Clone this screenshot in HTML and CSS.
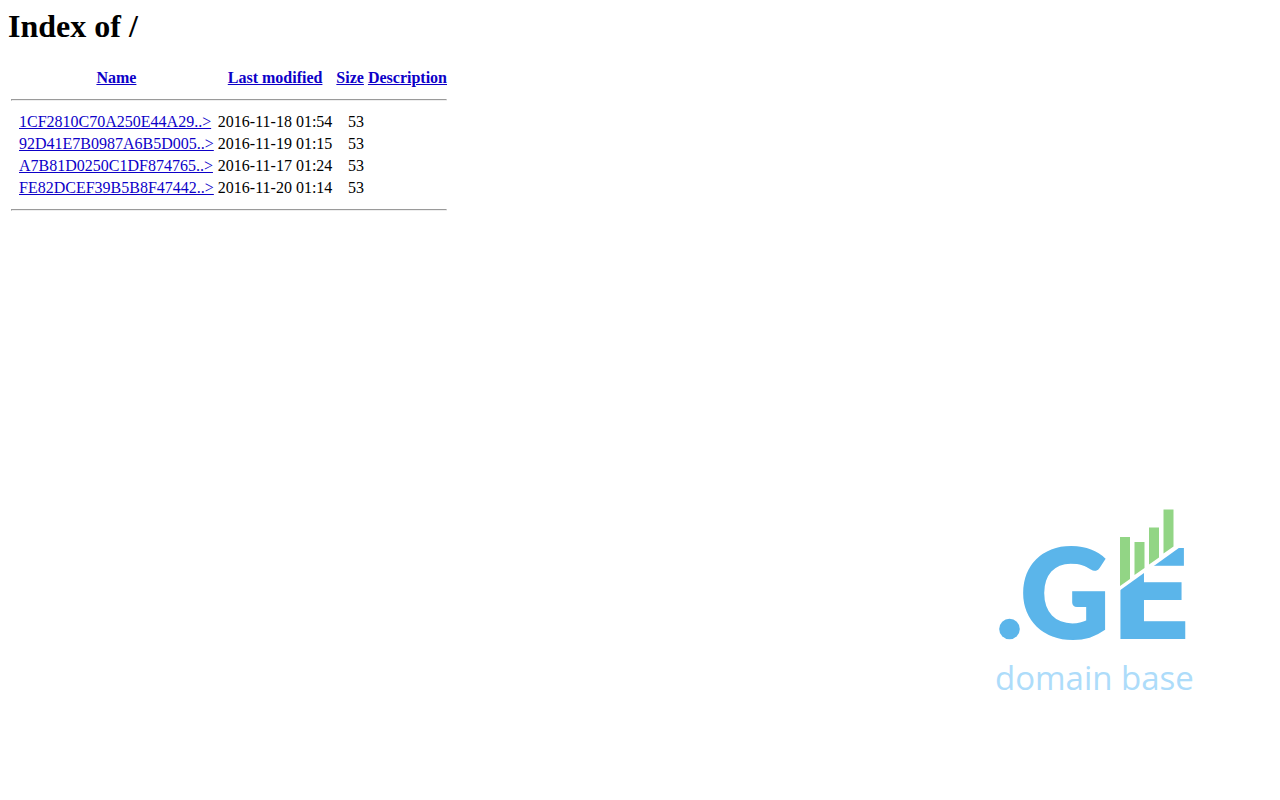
FILE: index.html
```
<!DOCTYPE html>
<html lang="en">
<head>
<meta charset="utf-8">
<title>Index of /</title>
<link rel="stylesheet" href="styles.css">
</head>
<body>
<main>
<h1 class="title">Index of /</h1>
<table class="listing">
<thead>
<tr><th>&nbsp;</th><th><a href="?C=N;O=D">Name</a></th><th><a href="?C=M;O=A">Last modified</a></th><th><a href="?C=S;O=A">Size</a></th><th><a href="?C=D;O=A">Description</a></th></tr>
<tr><th colspan="5"><hr></th></tr>
</thead>
<tbody>
<tr><td>&nbsp;</td><td><a href="#1CF2810C70A250E44A29">1CF2810C70A250E44A29..&gt;</a></td><td class="num">2016-11-18 01:54</td><td class="num">53</td><td></td></tr>
<tr><td>&nbsp;</td><td><a href="#92D41E7B0987A6B5D005">92D41E7B0987A6B5D005..&gt;</a></td><td class="num">2016-11-19 01:15</td><td class="num">53</td><td></td></tr>
<tr><td>&nbsp;</td><td><a href="#A7B81D0250C1DF874765">A7B81D0250C1DF874765..&gt;</a></td><td class="num">2016-11-17 01:24</td><td class="num">53</td><td></td></tr>
<tr><td>&nbsp;</td><td><a href="#FE82DCEF39B5B8F47442">FE82DCEF39B5B8F47442..&gt;</a></td><td class="num">2016-11-20 01:14</td><td class="num">53</td><td></td></tr>
<tr><th colspan="5"><hr></th></tr>
</tbody>
</table>
</main>
<svg class="logo" width="210" height="200" viewBox="990 500 210 200" role="img" aria-label=".GE domain base">
<circle class="blue" cx="1009.500" cy="629" r="10.300"/>
<text class="mark" x="1020" y="638">G</text>
<text class="mark mark-wide" x="1109" y="639">E</text>
<path class="cut" d="M1112 540H1183V545L1112 596Z"/>
<path class="green" d="M1120 537h10v42l-10 7zM1134.500 542h10v26l-10 7zM1149 527.500h10v30l-10 7zM1163.500 509.500h10v37l-10 7z"/>
<text class="caption" x="995" y="690">domain base</text>
</svg>
</body>
</html>
```
FILE: styles.css
```
body {
  box-sizing: border-box;
  display: flex;
  flex-direction: column;
  min-height: 100vh;
  margin: 0;
  padding: 8px;
  background: #fff;
  color: #000;
  font-family: "Liberation Serif", "Times New Roman", serif;
  font-size: 16px;
}

.title {
  margin: 0 0 21px;
  font-size: 32px;
}

.listing a {
  color: #0d00c8;
}

.num {
  text-align: right;
}

.logo {
  align-self: flex-end;
  margin: auto 72px 92px 0;
}

.blue {
  fill: #5bb5ea;
}

.mark {
  fill: #5bb5ea;
  stroke: #5bb5ea;
  stroke-width: 2px;
  font: 900 124px Lato, sans-serif;
}

.mark-wide {
  stroke: none;
  font: 700 125px "DejaVu Sans", sans-serif;
}

.cut {
  fill: #fff;
}

.green {
  fill: #92d585;
}

.caption {
  fill: #addcfa;
  font: 33px "Open Sans", sans-serif;
}
```
